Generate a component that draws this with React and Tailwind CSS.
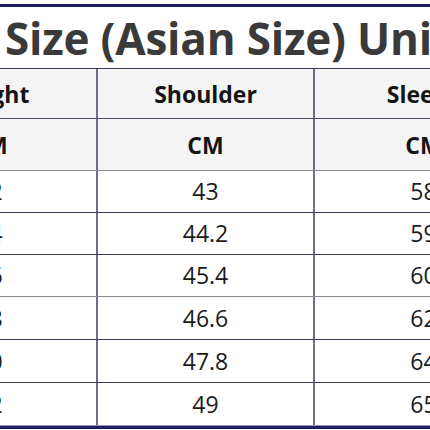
const rows = [
  ['72', '43', '58'],
  ['74', '44.2', '59'],
  ['76', '45.4', '60'],
  ['78', '46.6', '62'],
  ['80', '47.8', '64'],
  ['82', '49', '65'],
]

const rowHeights = ['h-[42px]', 'h-[42px]', 'h-[42px]', 'h-[43px]', 'h-[43px]', 'h-[42px]']

export default function App() {
  return (
    <div className="w-[430px] h-[430px] overflow-hidden bg-white font-['Open_Sans',sans-serif]">
      <div className="h-[4px]" />
      <div className="h-[3px] bg-[#1d1d6b]" />
      <div className="h-[61px] pl-[5px] flex items-center overflow-hidden whitespace-nowrap">
        <span className="text-[44px] font-bold text-[#3a3a3a] tracking-[-0.2px] leading-none">Size (Asian Size) Unit: CM</span>
      </div>
      <div className="ml-[-117px] w-[649px] border-t border-[#3c3c5e]">
        <div className="grid grid-cols-[215px_217px_217px] h-[50px] bg-[#f4f4f4] border-b border-[#4a4a6a]">
          {['Lenght', 'Shoulder', 'Sleeve'].map((h, i) => (
            <div key={h} className={`flex items-center justify-center text-[23px] font-bold text-[#141414] pt-[2px] ${i < 2 ? 'border-r-2 border-[#6e6e88]' : ''}`}>
              {h}
            </div>
          ))}
        </div>
        <div className="grid grid-cols-[215px_217px_217px] h-[52px] bg-[#f4f4f4] border-b border-[#8a8a96]">
          {['CM', 'CM', 'CM'].map((h, i) => (
            <div key={i} className={`flex items-center justify-center text-[23px] font-bold text-[#141414] pt-[2px] ${i < 2 ? 'border-r-2 border-[#6e6e88]' : ''}`}>
              {h}
            </div>
          ))}
        </div>
        {rows.map((r, ri) => (
          <div
            key={ri}
            className={`grid grid-cols-[215px_217px_217px] ${rowHeights[ri]} ${ri < rows.length - 1 ? 'border-b' : ''} ${ri === 2 ? 'border-[#8a8a96]' : 'border-[#3c3c5e]'}`}
          >
            {r.map((v, i) => (
              <div key={i} className={`flex items-center justify-center text-[23px] text-[#1a1a1a] ${i < 2 ? 'border-r-2 border-[#6e6e88]' : ''}`}>
                {v}
              </div>
            ))}
          </div>
        ))}
        <div className="h-[1px] bg-[#9a9aaa]" />
        <div className="h-[3px] bg-[#1d1d6b]" />
      </div>
    </div>
  )
}
